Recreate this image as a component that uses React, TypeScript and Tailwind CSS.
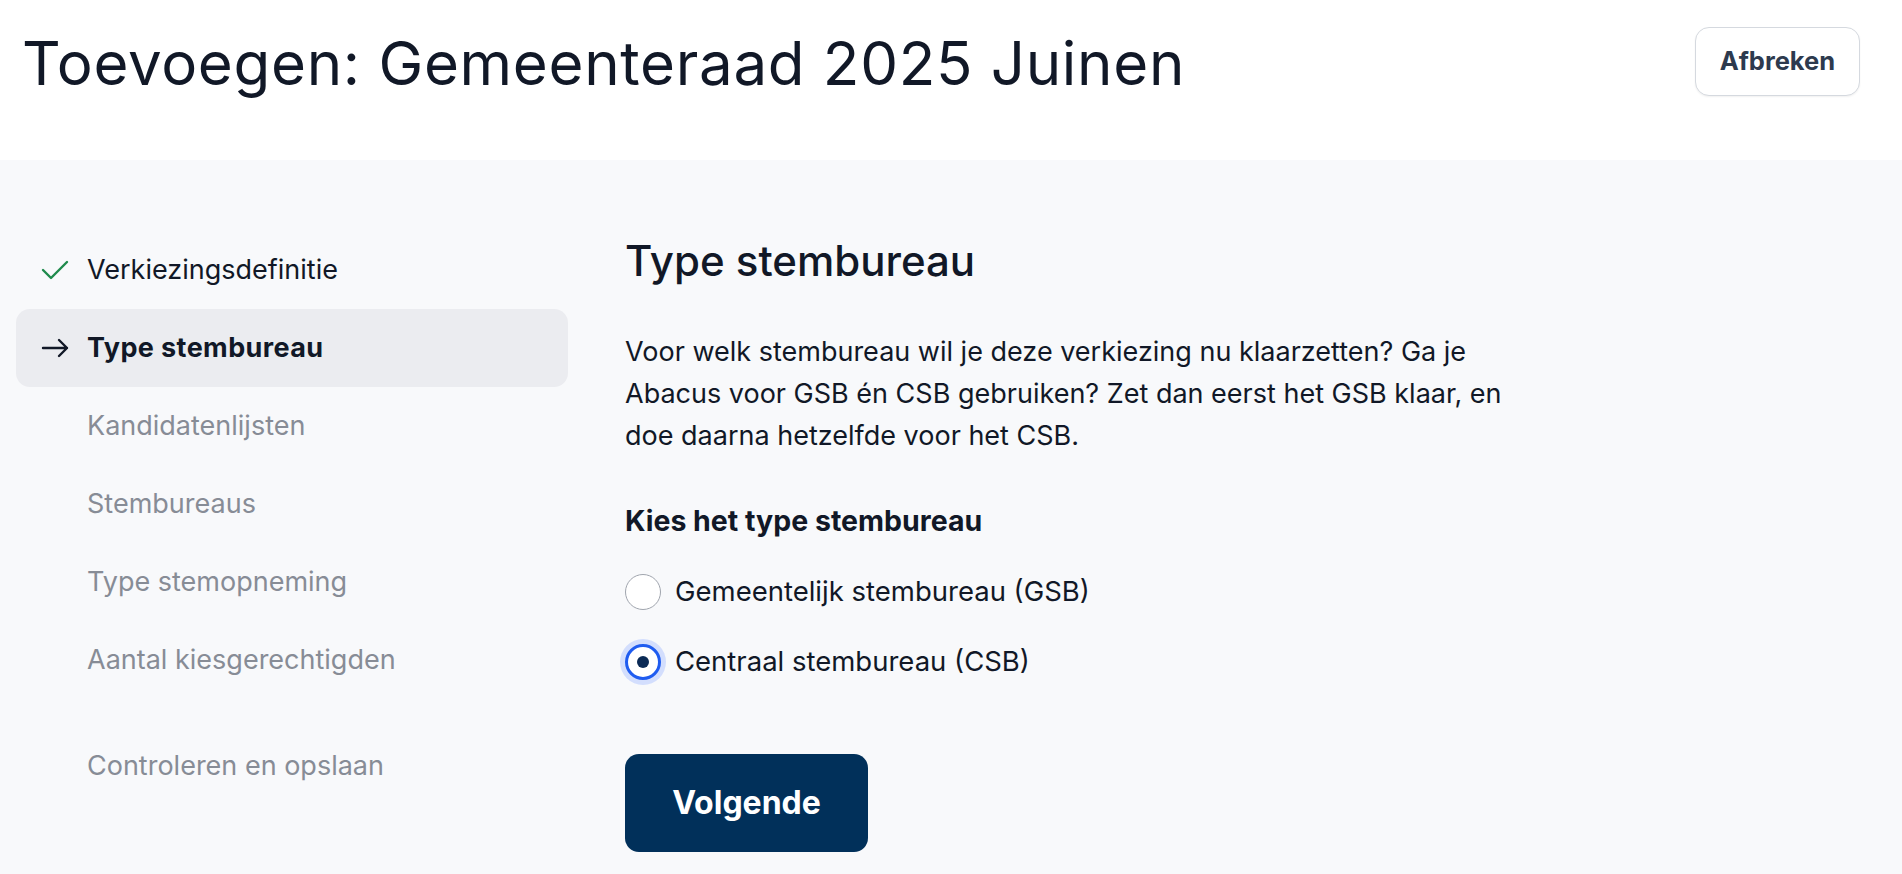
import React, { useState } from "react";

type Step = {
  label: string;
  state: "done" | "current" | "todo";
};

const steps: Step[] = [
  { label: "Verkiezingsdefinitie", state: "done" },
  { label: "Type stembureau", state: "current" },
  { label: "Kandidatenlijsten", state: "todo" },
  { label: "Stembureaus", state: "todo" },
  { label: "Type stemopneming", state: "todo" },
  { label: "Aantal kiesgerechtigden", state: "todo" },
];

const bodyFont = "font-['Inter','Noto_Sans',sans-serif]";

function CheckIcon() {
  return (
    <svg width="28" height="20" viewBox="0 0 28 20" fill="none">
      <polyline points="2,10 10,18 26,2" stroke="#1f8a4c" strokeWidth="2.4" strokeLinecap="round" strokeLinejoin="round" />
    </svg>
  );
}

function ArrowIcon() {
  return (
    <svg width="28" height="20" viewBox="0 0 28 20" fill="none">
      <path d="M2 10H26M18 2L26 10L18 18" stroke="#111827" strokeWidth="2.4" strokeLinecap="round" strokeLinejoin="round" />
    </svg>
  );
}

function StepItem({ step }: { step: Step }) {
  return (
    <li
      className={
        "flex h-[78px] items-center gap-[18px] rounded-[14px] pl-[25px] text-[27px] " +
        (step.state === "current"
          ? "bg-[#ebecf0] font-bold tracking-[0.4px] text-[#111827]"
          : step.state === "done"
            ? "text-[#111827]"
            : "text-[#878c96]")
      }
    >
      <span className="flex w-[28px] items-center justify-center">
        {step.state === "done" && <CheckIcon />}
        {step.state === "current" && <ArrowIcon />}
      </span>
      <span>{step.label}</span>
    </li>
  );
}

function Radio({ label, checked, onSelect }: { label: string; checked: boolean; onSelect: () => void }) {
  return (
    <label className="flex h-[40px] cursor-pointer items-center gap-[14px]" onClick={onSelect}>
      <span
        className={
          "flex h-[36px] w-[36px] items-center justify-center rounded-full bg-white " +
          (checked ? "border-[3px] border-[#1f5cf0] shadow-[0_0_0_5px_#d3defd]" : "border border-[#a0a5ae]")
        }
      >
        {checked && <span className="h-[12px] w-[12px] rounded-full bg-[#0b2a55]" />}
      </span>
      <span className="text-[27.5px] text-[#111827]">{label}</span>
    </label>
  );
}

export default function App() {
  const [type, setType] = useState<"GSB" | "CSB">("CSB");

  return (
    <div className={"min-h-[874px] w-full bg-[#f8f9fb] " + bodyFont}>
      <header className="flex h-[160px] items-start justify-between bg-white pl-[22px] pr-[42px] pt-[27px]">
        <h1 className="text-[60px] font-normal leading-[72px] tracking-[0.7px] text-[#111827]">
          Toevoegen: Gemeenteraad 2025 Juinen
        </h1>
        <button className="h-[69px] w-[165px] rounded-[14px] border-[1.5px] border-[#d5d9df] bg-white text-[25.5px] font-bold text-[#2d3a4e] shadow-[0_1px_2px_rgba(0,0,0,0.06)]">
          Afbreken
        </button>
      </header>

      <main className="flex gap-[57px] pl-[16px]">
        <nav className="w-[552px] shrink-0 pt-[71px]">
          <ul className="flex flex-col">
            {steps.map((s) => (
              <StepItem key={s.label} step={s} />
            ))}
          </ul>
          <ul className="mt-[28px]">
            <StepItem step={{ label: "Controleren en opslaan", state: "todo" }} />
          </ul>
        </nav>

        <section className="pt-[77px]">
          <h2 className="text-[42px] font-medium leading-[48px] text-[#111827]">Type stembureau</h2>
          <p className="mt-[46px] max-w-[910px] text-[27px] leading-[42px] text-[#111827]">
            Voor welk stembureau wil je deze verkiezing nu klaarzetten? Ga je Abacus voor GSB én CSB gebruiken? Zet dan eerst het GSB klaar, en doe daarna hetzelfde voor het CSB.
          </p>
          <h3 className="mt-[48px] text-[28.5px] font-bold leading-[32px] text-[#111827]">Kies het type stembureau</h3>
          <div className="mt-[35px] flex flex-col gap-[30px]">
            <Radio label="Gemeentelijk stembureau (GSB)" checked={type === "GSB"} onSelect={() => setType("GSB")} />
            <Radio label="Centraal stembureau (CSB)" checked={type === "CSB"} onSelect={() => setType("CSB")} />
          </div>
          <button className="mt-[72px] h-[98px] w-[243px] rounded-[14px] bg-[#01305a] text-[32px] font-bold text-white">
            Volgende
          </button>
        </section>
      </main>
    </div>
  );
}
